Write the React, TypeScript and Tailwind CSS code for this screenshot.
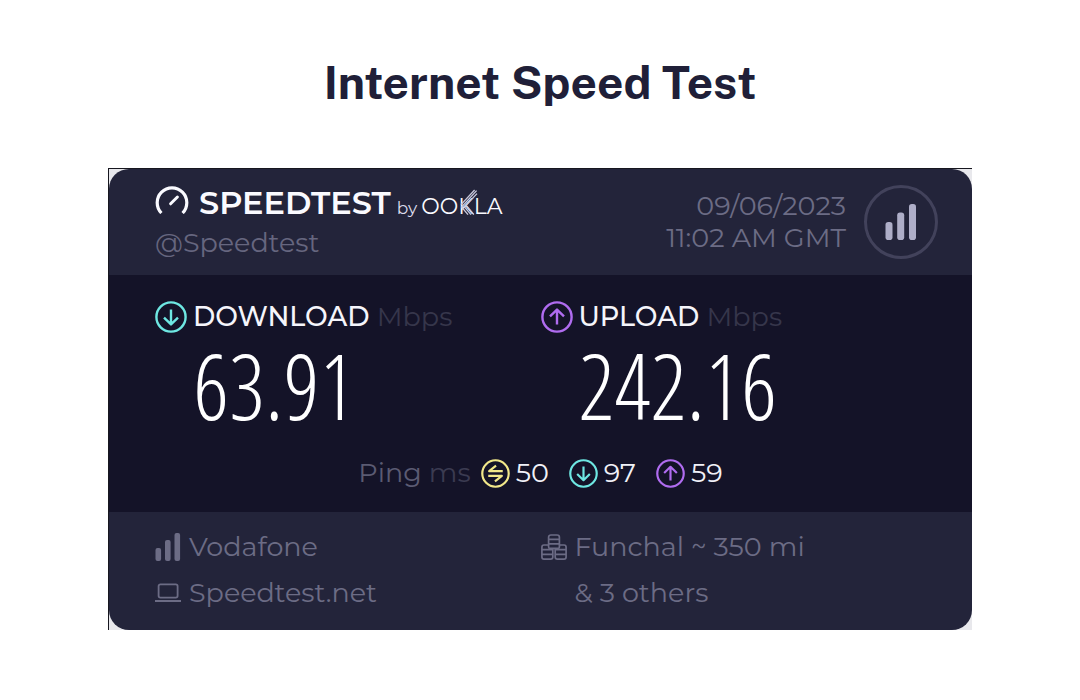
import type { ReactNode } from 'react'

interface IconProps {
  className?: string
}

function GaugeIcon({ className }: IconProps) {
  return (
    <svg viewBox="0 0 34 28" className={className} fill="none" stroke="currentColor" strokeLinecap="round" aria-hidden="true">
      <path d="M6.4 27A14.8 14.8 0 1 1 27.6 27" strokeWidth="3.2" strokeLinecap="butt" />
      <path d="M15.6 17.8L22.4 11" strokeWidth="3" />
    </svg>
  )
}

function ArrowCircle({ up, className }: IconProps & { up?: boolean }) {
  return (
    <svg viewBox="0 0 32 32" className={className} fill="none" stroke="currentColor" strokeWidth="2.4" aria-hidden="true">
      <circle cx="16" cy="16" r="14.6" />
      {up ? (
        <path d="M16 23.6V9.4M9 15.4L16 8.6L23 15.4" strokeLinejoin="round" />
      ) : (
        <path d="M16 8.4V22.6M9 16.6L16 23.4L23 16.6" strokeLinejoin="round" />
      )}
    </svg>
  )
}

function PingIcon({ className }: IconProps) {
  return (
    <svg viewBox="0 0 32 32" className={className} fill="none" stroke="currentColor" strokeWidth="2.4" aria-hidden="true">
      <circle cx="16" cy="16" r="14.6" />
      <path d="M24 13.4H9L16.6 7.4M8 18.6H23L15.4 24.6" strokeLinejoin="round" />
    </svg>
  )
}

function BarsIcon({ className }: IconProps) {
  return (
    <svg viewBox="0 0 26 28" className={className} fill="currentColor" aria-hidden="true">
      <rect x="0.5" y="15" width="5.6" height="13" rx="2" />
      <rect x="10" y="7" width="5.6" height="21" rx="2" />
      <rect x="19.5" y="0" width="5.6" height="28" rx="2" />
    </svg>
  )
}

function SignalIcon({ className }: IconProps) {
  return (
    <svg viewBox="0 0 32 36" className={className} fill="currentColor" aria-hidden="true">
      <rect x="0.5" y="18" width="7" height="18" rx="2.8" />
      <rect x="12.2" y="8.5" width="7" height="27.5" rx="2.8" />
      <rect x="24" y="0" width="7" height="36" rx="2.8" />
    </svg>
  )
}

function LaptopIcon({ className }: IconProps) {
  return (
    <svg viewBox="0 0 26 20" className={className} fill="none" stroke="currentColor" strokeWidth="1.8" aria-hidden="true">
      <rect x="3.6" y="1.4" width="19" height="13.2" rx="1.8" />
      <path d="M0 18H26" />
    </svg>
  )
}

function ServersIcon({ className }: IconProps) {
  return (
    <svg viewBox="0 0 26 26" className={className} fill="none" stroke="currentColor" strokeWidth="1.7" aria-hidden="true">
      <path d="M7.6 13V3.2Q7.6 1 10 1H16Q18.4 1 18.4 3.2V13Q18.4 14.4 17 14.4H9Q7.6 14.4 7.6 13Z" />
      <path d="M7.6 5.4H18.4M7.6 9.8H18.4" />
      <path d="M7.6 11H3Q0.9 11 0.9 13.2V23Q0.9 25.1 3 25.1H9.6Q11.8 25.1 11.8 23V14.4" />
      <path d="M0.9 15.6H11.8M0.9 20.4H11.8" />
      <path d="M18.4 11H23Q25.1 11 25.1 13.2V23Q25.1 25.1 23 25.1H16.4Q14.2 25.1 14.2 23V14.4" />
      <path d="M14.2 15.6H25.1M14.2 20.4H25.1" />
    </svg>
  )
}

function OoklaMark() {
  return (
    <span className="relative text-[22px] leading-6">
      OOKLA
      {/* striped arms of the K */}
      <svg viewBox="0 0 20 26" className="absolute bottom-1 left-[37px] h-[26px] w-5" fill="none" stroke="#c9c9dc" strokeWidth="1.3" aria-hidden="true">
        <path d="M3 15.6L16.6 1M3.6 18L18.6 1.6M5.6 18.8L19 4.6" />
        <path d="M3.6 18L10 25.6M6 17.4L13 25.6M8.4 16.8L15.8 25.6" />
      </svg>
    </span>
  )
}

const results = [
  { label: 'DOWNLOAD', value: '63.91', up: false, color: 'text-[#6ee7e2]' },
  { label: 'UPLOAD', value: '242.16', up: true, color: 'text-[#b06cf0]' },
]

function PingValue({ icon, value }: { icon: ReactNode; value: string }) {
  return (
    <span className="flex items-center gap-1.5 text-[#f1f1f8]">
      {icon}
      {value}
    </span>
  )
}

export default function App() {
  return (
    <main className="min-h-screen bg-white pt-14 pb-16 font-['Montserrat','Inter',sans-serif] text-[27px] leading-8">
      <h1 className="text-center font-['Public_Sans','Inter',sans-serif] text-[46px] leading-[52px] font-bold text-[#201f38]">
        Internet Speed Test
      </h1>

      <div className="mx-auto mt-[60px] w-4/5 border-t border-l border-[#17171f] bg-[#e8e8ec]">
        <article className="overflow-hidden rounded-[20px] bg-[#23243a]">
          <header className="flex items-center justify-between py-4 pr-[34px] pl-[46px]">
            <div>
              <div className="flex items-baseline text-[#fafaff]">
                <GaugeIcon className="mr-2.5 h-7 w-[34px]" />
                <span className="text-[32px] leading-8 font-semibold">SPEEDTEST</span>
                <span className="mr-1 ml-1.5 text-[17px] leading-5 text-[#dcdcec]">by</span>
                <OoklaMark />
              </div>
              <p className="mt-2 text-[#66667f]">@Speedtest</p>
            </div>
            <div className="flex items-center gap-[18px]">
              <p className="text-right text-[#6c6c85]">
                09/06/2023
                <br />
                11:02 AM GMT
              </p>
              <div className="flex size-[74px] items-center justify-center rounded-full border-3 border-[#42425b]">
                <SignalIcon className="h-9 w-8 text-[#aeaec8]" />
              </div>
            </div>
          </header>

          <section className="bg-[#141328] px-[46px] pt-[26px] pb-[23px]">
            <div className="grid grid-cols-2">
              {results.map((r) => (
                <div key={r.label}>
                  <h2 className="flex items-center gap-1.5 font-medium text-[#f5f5fb]">
                    <ArrowCircle up={r.up} className={`size-8 ${r.color}`} />
                    <span>
                      {r.label} <span className="font-normal text-[#36364b]">Mbps</span>
                    </span>
                  </h2>
                  <p className="pl-[38px] font-['Open_Sans_Condensed_Light','Open_Sans_Condensed','Roboto',sans-serif] text-[90px] leading-[104px] font-light text-white">
                    {r.value}
                  </p>
                </div>
              ))}
            </div>
            <div className="mt-5 flex items-center justify-center gap-5">
              <div className="flex items-center gap-2.5">
                <span className="text-[#5b5b73]">
                  Ping <span className="text-[#3b3b51]">ms</span>
                </span>
                <PingValue icon={<PingIcon className="size-[29px] text-[#f2e88a]" />} value="50" />
              </div>
              <PingValue icon={<ArrowCircle className="size-[29px] text-[#6ee7e2]" />} value="97" />
              <PingValue icon={<ArrowCircle up className="size-[29px] text-[#b06cf0]" />} value="59" />
            </div>
          </section>

          <footer className="grid grid-cols-2 gap-y-3.5 px-[46px] pt-[19px] pb-[21px] text-[#6c6c85]">
            <p className="flex items-center gap-2">
              <BarsIcon className="h-7 w-[26px]" />
              Vodafone
            </p>
            <p className="flex items-center gap-2">
              <ServersIcon className="size-[26px]" />
              Funchal ~ 350 mi
            </p>
            <p className="flex items-center gap-2">
              <LaptopIcon className="h-5 w-[26px]" />
              Speedtest.net
            </p>
            <p className="pl-[34px]">&amp; 3 others</p>
          </footer>
        </article>
      </div>
    </main>
  )
}
